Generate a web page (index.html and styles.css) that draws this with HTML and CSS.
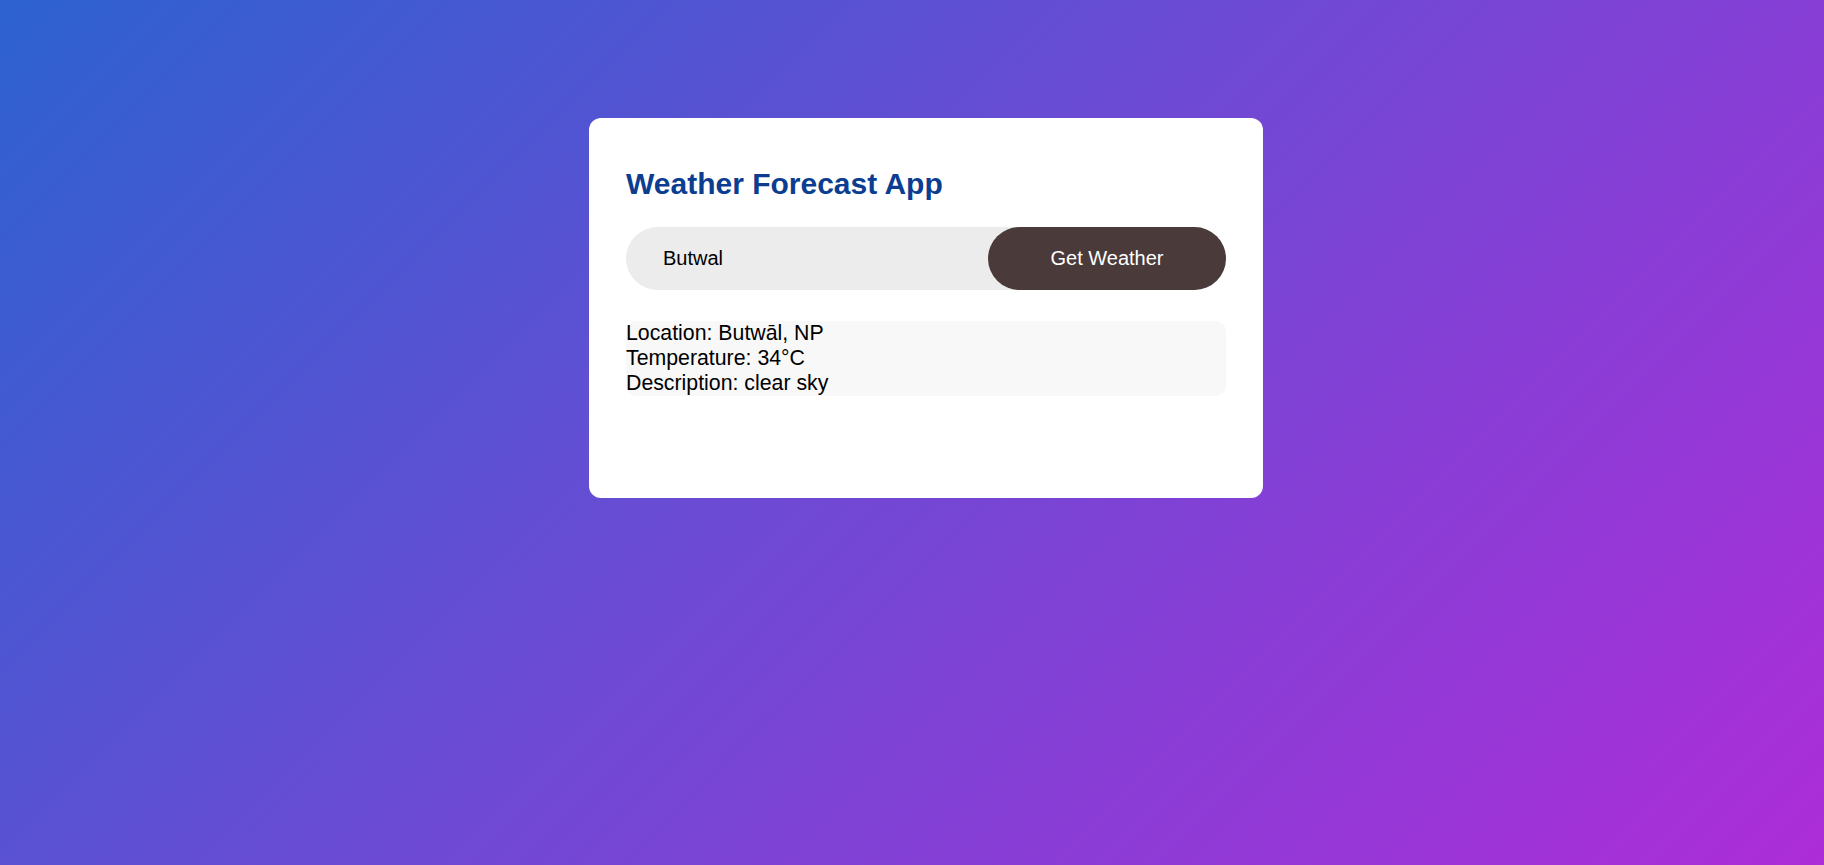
FILE: index.html
```html
<!DOCTYPE html>
<html lang="en">
<head>
<meta charset="utf-8">
<title>Weather Forecast App</title>
<link rel="stylesheet" href="styles.css">
</head>
<body>
  <main class="card">
    <h1 class="title">Weather Forecast App</h1>
    <form class="search" onsubmit="return false;">
      <input class="search-input" type="text" value="Butwal">
      <button class="search-btn" type="submit">Get Weather</button>
    </form>
    <section class="result">
      <div class="result-line">Location: Butwāl, NP</div>
      <div class="result-line">Temperature: 34°C</div>
      <div class="result-line">Description: clear sky</div>
    </section>
  </main>
</body>
</html>
```

FILE: styles.css
```css
* {
  box-sizing: border-box;
}

html, body {
  margin: 0;
  height: 100%;
}

body {
  font-family: "Liberation Sans", Arial, sans-serif;
  background: linear-gradient(135deg, #2d62d0 0%, #6b4bd4 45%, #ad2dd8 100%);
  display: flex;
  justify-content: center;
  align-items: flex-start;
  padding-top: 118px;
  padding-left: 28px;
}

.card {
  width: 674.5px;
  background: #ffffff;
  border-radius: 12px;
  padding: 48px 37.25px 102px;
}

.title {
  margin: 0;
  font-size: 30px;
  line-height: 36px;
  font-weight: bold;
  color: #0b3d91;
}

.search {
  margin: 25px 0 0;
  display: flex;
  height: 63px;
  background: #ececec;
  border-radius: 32px;
}

.search-input {
  flex: 1;
  min-width: 0;
  border: none;
  outline: none;
  background: transparent;
  padding: 0 0 0 37px;
  font-family: "Liberation Sans", Arial, sans-serif;
  font-size: 20px;
  color: #000000;
}

.search-btn {
  width: 238px;
  border: none;
  border-radius: 32px;
  background: #4a3a3a;
  color: #ffffff;
  font-family: "Liberation Sans", Arial, sans-serif;
  font-size: 20px;
  cursor: pointer;
}

.result {
  margin-top: 31px;
  background: #f8f8f8;
  border-radius: 10px;
  font-size: 21.3px;
  line-height: 25px;
  color: #000000;
}
```
